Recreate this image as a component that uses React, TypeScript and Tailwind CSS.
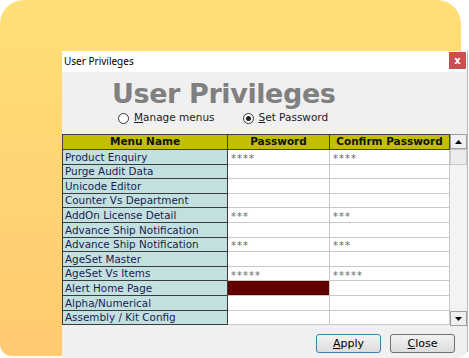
import React from "react";

const rows: { name: string; pw: string; cpw: string; dark?: boolean }[] = [
  { name: "Product Enquiry", pw: "****", cpw: "****" },
  { name: "Purge Audit Data", pw: "", cpw: "" },
  { name: "Unicode Editor", pw: "", cpw: "" },
  { name: "Counter Vs Department", pw: "", cpw: "" },
  { name: "AddOn License Detail", pw: "***", cpw: "***" },
  { name: "Advance Ship Notification", pw: "", cpw: "" },
  { name: "Advance Ship Notification", pw: "***", cpw: "***" },
  { name: "AgeSet Master", pw: "", cpw: "" },
  { name: "AgeSet Vs Items", pw: "*****", cpw: "*****" },
  { name: "Alert Home Page", pw: "", cpw: "", dark: true },
  { name: "Alpha/Numerical", pw: "", cpw: "" },
  { name: "Assembly / Kit Config", pw: "", cpw: "" },
];

const vf = { fontFamily: '"DejaVu Sans", Verdana, sans-serif' };

function Radio({ checked }: { checked?: boolean }) {
  return (
    <span className="relative inline-flex w-[11px] h-[11px] rounded-full border border-[#333] bg-white items-center justify-center">
      {checked && <span className="w-[5px] h-[5px] rounded-full bg-[#222]" />}
    </span>
  );
}

export default function App() {
  return (
    <div className="relative w-[469px] h-[358px] bg-white overflow-hidden rounded-br-[12px]">
      <div className="absolute left-0 top-0 w-[461px] h-[356px] rounded-[24px] rounded-bl-[12px] bg-gradient-to-b from-[#FFDF76] to-[#FFCA70]" />
      <div className="relative ml-[62px] pt-[51px] w-[406px]">
        <div className="flex flex-col border-r border-[#b8b8b8] h-[307px]">
          {/* title bar */}
          <div className="h-[21px] bg-white flex items-center justify-between">
            <span className="pl-[2px] text-[10px] text-black" style={{ fontFamily: '"Noto Sans", "Open Sans", sans-serif' }}>
              User Privileges
            </span>
            <div className="w-[17px] h-[17px] mb-[2px] mr-[1px] bg-[#C75050] flex items-center justify-center text-white text-[10px] font-bold leading-none" style={vf}>
              x
            </div>
          </div>
          {/* body */}
          <div className="flex-1 bg-[#F0F0F0] flex flex-col">
            <div className="pl-[50px] pt-[5px] h-[35px] text-[27px] font-bold text-[#808080] leading-[34px] tracking-[-0.4px]" style={vf}>
              User Privileges
            </div>
            <div className="flex items-center h-[22px] pl-[56px] text-[10.5px] text-[#1a1a1a]" style={vf}>
              <span className="flex items-center gap-[5px]">
                <Radio />
                <span><span className="underline">M</span>anage menus</span>
              </span>
              <span className="flex items-center gap-[5px] ml-[28px]">
                <Radio checked />
                <span><span className="underline">S</span>et Password</span>
              </span>
            </div>
            {/* table */}
            <div className="flex mt-[5px]">
              <div className="flex flex-col">
                <div className="flex h-[16px] bg-[#C3BF00] border-t border-b border-[#404040] text-[10.5px] font-bold text-[#111]" style={vf}>
                  <div className="w-[166px] border-l border-r border-[#404040] flex items-center justify-center">Menu Name</div>
                  <div className="w-[102px] border-r border-[#404040] flex items-center justify-center">Password</div>
                  <div className="w-[120px] border-r border-[#404040] flex items-center justify-center">Confirm Password</div>
                </div>
                {rows.map((r, i) => (
                  <div key={i} className="flex h-[14.6px]">
                    <div className="w-[166px] bg-[#C2E0E0] border-l border-r border-b border-[#3c3c3c] flex items-center pl-[2px] text-[10.4px] text-[#1b1b50] leading-none" style={vf}>
                      {r.name}
                    </div>
                    <div className={`w-[102px] border-r border-b border-[#c8c8c8] flex items-center pl-[3px] pt-[4px] text-[10px] tracking-[1px] text-[#666] leading-none ${r.dark ? "bg-[#600000]" : "bg-white"}`} style={vf}>
                      {r.pw}
                    </div>
                    <div className="w-[120px] bg-white border-r border-b border-[#c8c8c8] flex items-center pl-[3px] pt-[4px] text-[10px] tracking-[1px] text-[#666] leading-none" style={vf}>
                      {r.cpw}
                    </div>
                  </div>
                ))}
              </div>
              {/* scrollbar */}
              <div className="w-[17px] flex flex-col bg-[repeating-conic-gradient(#ececec_0_25%,#fafafa_0_50%)] bg-[length:2px_2px] h-[192px]">
                <div className="h-[15px] bg-[#F0F0F0] border border-[#a0a0a0] flex items-center justify-center">
                  <svg width="7" height="4" viewBox="0 0 7 4"><path d="M0 4 L3.5 0 L7 4 Z" fill="#000" /></svg>
                </div>
                <div className="h-[16px] bg-[#ececec] border border-[#c8c8c8]" />
                <div className="flex-1" />
                <div className="h-[15px] bg-[#F0F0F0] border border-[#a0a0a0] flex items-center justify-center">
                  <svg width="7" height="4" viewBox="0 0 7 4"><path d="M0 0 L3.5 4 L7 0 Z" fill="#000" /></svg>
                </div>
              </div>
            </div>
            {/* buttons */}
            <div className="flex justify-end gap-[9px] pr-[12px] mt-[8px]">
              <button className="w-[65px] h-[19px] rounded-[3px] border border-[#3c7fb1] bg-gradient-to-b from-[#f2f2f2] to-[#dcdcdc] text-[11px] text-black leading-none" style={vf}>
                <span className="underline">A</span>pply
              </button>
              <button className="w-[65px] h-[19px] rounded-[3px] border border-[#707070] bg-gradient-to-b from-[#f2f2f2] to-[#dcdcdc] text-[11px] text-black leading-none" style={vf}>
                <span className="underline">C</span>lose
              </button>
            </div>
          </div>
        </div>
      </div>
    </div>
  );
}
